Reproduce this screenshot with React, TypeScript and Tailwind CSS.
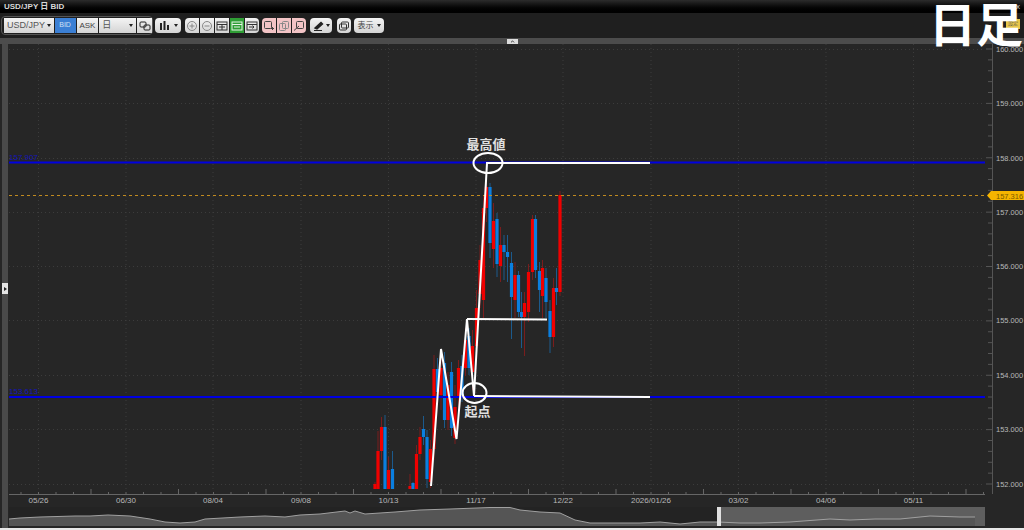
import { ChevronDown } from 'lucide-react';
import type { ReactNode } from 'react';

// [x, bodyTop, bodyBottom, wickTop, wickBottom, up?]
const candles: [number, number, number, number, number, boolean][] = [
  [375, 484, 489, 482, 489, true],
  [378, 451, 489, 431, 489, true],
  [381.5, 427, 451, 417, 460, true],
  [385, 427, 489, 415, 489, false],
  [388.5, 470, 489, 457, 489, true],
  [392.5, 469, 489, 451, 489, false],
  [410, 486, 489, 474, 489, true],
  [413, 483, 489, 482, 489, false],
  [416.5, 454, 489, 445, 489, true],
  [420, 437, 454, 427, 460, true],
  [423.5, 429, 437, 416, 445, false],
  [427, 437, 479, 430, 488, false],
  [430.5, 449, 482, 440, 488, true],
  [434, 369, 449, 355, 460, true],
  [437.5, 369, 392, 358, 405, false],
  [441, 368, 395, 350, 410, true],
  [444.5, 363, 420, 352, 428, false],
  [448, 385, 420, 372, 430, true],
  [451.5, 372, 428, 362, 436, false],
  [455, 407, 438, 385, 444, true],
  [458.5, 368, 398, 360, 410, true],
  [462, 366, 395, 355, 402, false],
  [465.5, 340, 368, 328, 376, true],
  [469, 336, 368, 328, 375, false],
  [472.5, 346, 372, 330, 390, true],
  [476.5, 308, 346, 290, 356, true],
  [480, 260, 294, 245, 308, true],
  [483.5, 208, 300, 195, 318, true],
  [486.5, 187, 208, 175, 222, true],
  [490, 187, 243, 183, 258, false],
  [493.5, 221, 249, 203, 268, true],
  [497, 219, 264, 213, 277, false],
  [500.5, 245, 266, 227, 282, true],
  [504, 245, 252, 235, 280, false],
  [507.5, 252, 257, 235, 282, false],
  [511.5, 263, 297, 252, 339, false],
  [515, 275, 300, 262, 318, true],
  [518.5, 275, 312, 271, 317, false],
  [521.5, 312, 317, 292, 348, false],
  [524.5, 303, 317, 292, 356, true],
  [528.5, 272, 312, 264, 322, true],
  [532.5, 219, 272, 215, 280, true],
  [535.5, 219, 270, 215, 278, false],
  [539.5, 271, 290, 262, 312, false],
  [542.5, 268, 296, 260, 318, true],
  [546, 278, 302, 268, 318, false],
  [550, 311, 337, 300, 353, false],
  [553.5, 288, 337, 278, 347, true],
  [556.5, 288, 292, 268, 305, false],
  [560, 195, 292, 191, 296, true],
];

const prices = [
  ['160.000', 49],
  ['159.000', 103],
  ['158.000', 158],
  ['157.000', 212],
  ['156.000', 266],
  ['155.000', 320],
  ['154.000', 375],
  ['153.000', 429],
  ['152.000', 484],
] as const;

const dates = [
  ['05/26', 38.5],
  ['06/30', 126],
  ['08/04', 213],
  ['09/08', 301],
  ['10/13', 388.5],
  ['11/17', 476],
  ['12/22', 563],
  ['2026/01/26', 651],
  ['03/02', 738.5],
  ['04/06', 826],
  ['05/11', 913.5],
];

const navLine =
  '9,519 20,518 40,517 75,516 90,516 108,515 130,516 150,519 165,522 180,523 195,522 205,519 240,517 265,516 285,517 300,515 320,514 345,511 350,513 355,511 365,514 395,512 420,510 450,509 490,507.5 510,507.5 520,510 540,512 560,513 575,520 590,523 610,523 640,523 660,522 680,524 700,522 718,522 740,523 760,523 790,522 830,519 850,520 875,519 900,519 930,516 960,517 975,517';

const Btn = ({ className, children }: { className: string; children?: ReactNode }) => (
  <div className={`h-[15px] flex items-center bg-gradient-to-b from-[#f4f4f4] to-[#d4d4d4] text-[#444] text-[8px] ${className}`}>
    {children}
  </div>
);

const Ico = ({ children, stroke = '#555' }: { children: ReactNode; stroke?: string }) => (
  <svg width="12" height="12" viewBox="0 0 12 12" fill="none" stroke={stroke} strokeWidth="1">
    {children}
  </svg>
);

const Caret = () => <span className="w-0 h-0 border-x-[2.5px] border-x-transparent border-t-[3px] border-t-[#222]" />;

const Toolbar = () => (
  <div className="h-[25px] flex items-center pl-[1px] bg-[#1f1f1f]">
    <div className="flex items-center gap-[1px] h-[19px] w-[152px] pl-[2px] rounded-sm border border-[#555]">
      <Btn className="w-[50px] justify-between px-[3px]">
        <span className="text-[9px] text-[#555]">USD/JPY</span>
        <Caret />
      </Btn>
      <div className="h-[15px] w-[21px] flex items-center justify-center bg-[#3b7fd4] text-[#cfe0f5] text-[7px]">BID</div>
      <Btn className="w-[22px] justify-center">ASK</Btn>
      <Btn className="w-[37px] justify-between px-[3px]">
        <span className="text-[9px] text-[#555]">日</span>
        <Caret />
      </Btn>
      <Btn className="w-[15px] justify-center">
        <Ico stroke="#222">
          <rect x="1" y="2" width="6" height="5" rx="1" />
          <rect x="5" y="5" width="6" height="5" rx="1" />
        </Ico>
      </Btn>
    </div>
    <Btn className="w-[26px] ml-[2px] justify-center gap-[4px] rounded-sm">
      <svg width="11" height="11" viewBox="0 0 11 11" fill="#222">
        <rect x="1" y="3" width="2" height="7" />
        <rect x="4.5" y="1" width="2" height="9" />
        <rect x="8" y="5" width="2" height="5" />
      </svg>
      <Caret />
    </Btn>
    <div className="flex ml-[4px] gap-[1px]">
      <Btn className="w-[14px] justify-center rounded-l-sm">
        <Ico stroke="#888">
          <circle cx="6" cy="6" r="4.5" />
          <path d="M3.5 6h5M6 3.5v5" />
        </Ico>
      </Btn>
      <Btn className="w-[14px] justify-center">
        <Ico stroke="#888">
          <circle cx="6" cy="6" r="4.5" />
          <path d="M3.5 6h5" />
        </Ico>
      </Btn>
      <Btn className="w-[14px] justify-center">
        <Ico stroke="#333">
          <rect x="1" y="2" width="10" height="8" />
          <path d="M1 4.5h10M6 4.5V10M3 7h6" />
        </Ico>
      </Btn>
      <div className="w-[14px] h-[15px] flex items-center justify-center bg-[#2f9e35]">
        <Ico stroke="#e8f5e8">
          <rect x="1" y="2" width="10" height="8" />
          <path d="M1 4.5h10M3 7h6" />
        </Ico>
      </div>
      <Btn className="w-[14px] justify-center rounded-r-sm">
        <Ico stroke="#333">
          <rect x="1" y="2" width="10" height="8" />
          <path d="M1 4.5h10M3 7h5M6.5 5.5 8 7 6.5 8.5" />
        </Ico>
      </Btn>
    </div>
    <div className="flex ml-[3px] gap-[1px]">
      <div className="w-[14px] h-[15px] flex items-center justify-center bg-[#f3c4c6] rounded-l-sm">
        <Ico stroke="#444">
          <rect x="1.5" y="1.5" width="7" height="7" rx="1" />
          <path d="M8 8.5h3M9.5 7v3" />
        </Ico>
      </div>
      <div className="w-[14px] h-[15px] flex items-center justify-center bg-[#f3c4c6]">
        <Ico stroke="#888">
          <rect x="1.5" y="3.5" width="6" height="7" rx="1" />
          <rect x="4.5" y="1.5" width="6" height="7" rx="1" />
        </Ico>
      </div>
      <div className="w-[14px] h-[15px] flex items-center justify-center bg-[#f3c4c6] rounded-r-sm">
        <Ico stroke="#444">
          <rect x="3.5" y="1.5" width="7" height="7" rx="1" />
          <path d="M1 10.5 6 6" />
        </Ico>
      </div>
    </div>
    <Btn className="w-[22px] ml-[4px] justify-center gap-[2px] rounded-sm">
      <svg width="11" height="11" viewBox="0 0 11 11" fill="none" stroke="#222" strokeWidth="1.4">
        <path d="M2 8 8 2.5l1.5 1.5L4 9z" fill="#222" />
        <path d="M1 10.5h8" strokeWidth="1" />
      </svg>
      <Caret />
    </Btn>
    <Btn className="w-[14px] ml-[5px] justify-center rounded-sm">
      <Ico stroke="#333">
        <rect x="1.5" y="4" width="7" height="6" rx="1" />
        <rect x="3.5" y="2" width="7" height="6" rx="1" />
      </Ico>
    </Btn>
    <Btn className="w-[30px] ml-[3px] justify-center gap-[3px] rounded-sm">
      <span>表示</span>
      <Caret />
    </Btn>
    <span className="ml-auto mr-[4px] mb-[4px] w-[14px] h-[10px] flex items-center justify-center bg-[#e8c64a] text-[5px] text-[#555]">
      設定
    </span>
  </div>
);

const Chart = () => (
  <svg className="block w-full h-full" viewBox="9 44 1015 463" preserveAspectRatio="none">
    {prices.map(([, y]) => (
      <line key={y} x1="9" x2="985" y1={y + 0.5} y2={y + 0.5} stroke="#3c3c3c" strokeDasharray="1 3" />
    ))}
    {dates.map(([, x]) => (
      <line key={x} x1={x} x2={x} y1="44" y2="489" stroke="#3c3c3c" strokeDasharray="1 3" />
    ))}

    {/* price axis */}
    <line x1="992.5" x2="992.5" y1="44" y2="494" stroke="#555" />
    {Array.from({ length: 41 }, (_, i) => 49 + i * 10.875).map((y, i) => (
      <line key={i} x1={i % 5 === 0 ? 986 : 988} x2="992" y1={y} y2={y} stroke="#555" />
    ))}
    {prices.map(([label, y]) => (
      <text key={label} x="996" y={y + 3} fontSize="7.5" fill="#b8b8b8">{label}</text>
    ))}

    {/* time axis */}
    <line x1="9" x2="985" y1="494.5" y2="494.5" stroke="#666" />
    {Array.from({ length: 56 }, (_, i) => 21 + i * 17.5).map((x, i) => (
      <line key={i} x1={x} x2={x} y1={(i + 1) % 5 === 0 ? 489 : 492} y2="494" stroke="#666" />
    ))}
    {dates.map(([label, x]) => (
      <text key={label} x={x} y="503" fontSize="8" fill="#b8b8b8" textAnchor="middle">{label}</text>
    ))}

    {/* candles */}
    {candles.map(([x, top, bottom, wickTop, wickBottom, up], i) => (
      <g key={i}>
        <line x1={x} x2={x} y1={wickTop} y2={wickBottom} stroke={up ? '#7a1d1d' : '#1c5a8c'} />
        <rect x={x - 1.6} y={top} width="3.2" height={bottom - top} fill={up ? '#f00000' : '#0a7fe0'} />
      </g>
    ))}

    {/* levels */}
    <line x1="9" x2="985" y1="162.5" y2="162.5" stroke="#0000e0" strokeWidth="2" />
    <line x1="9" x2="985" y1="397" y2="397" stroke="#0000e0" strokeWidth="2" />
    <line x1="9" x2="985" y1="195.5" y2="195.5" stroke="#c08a20" strokeDasharray="3 3" />
    <text x="9" y="160" fontSize="8" fill="#1414b8">157.907</text>
    <text x="9" y="394" fontSize="8" fill="#1414b8">153.613</text>

    {/* last price tag */}
    <path d="M987 195.5 991 191H1024V200H991Z" fill="#f5b400" />
    <text x="996" y="198.5" fontSize="7.5" fill="#7a5a00">157.316</text>

    {/* hand-drawn marks */}
    <g fill="none" stroke="#fff" strokeWidth="2">
      <polyline points="431,486 441,349 456.5,439 467,319 474,396 487,163 650,163" />
      <line x1="467" x2="547" y1="319" y2="319.5" />
      <line x1="474" x2="650" y1="396" y2="397" />
      <ellipse cx="488" cy="163" rx="14.5" ry="10" />
      <ellipse cx="474.5" cy="393" rx="12" ry="10" />
    </g>
    <text x="486" y="149" fontSize="13" fontWeight="700" fill="#e0e0e0" textAnchor="middle">最高値</text>
    <text x="477.5" y="416" fontSize="13" fontWeight="700" fill="#e0e0e0" textAnchor="middle">起点</text>
  </svg>
);

const Navigator = () => (
  <svg className="block w-full h-full" viewBox="9 507 1015 21" preserveAspectRatio="none">
    <rect x="9" y="507" width="709" height="19" fill="#232323" />
    <rect x="718" y="507" width="267" height="19" fill="#5e5e5e" />
    <polygon points={`${navLine} 975,526 9,526`} fill="#555" />
    <polygon points="718,507 985,507 985,526 975,526 975,517 960,517 930,516 900,519 875,519 850,520 830,519 790,522 760,523 740,523 718,522" fill="#5e5e5e" />
    <polyline points={navLine} fill="none" stroke="#a0a0a0" />
    <rect x="717" y="507" width="4" height="19" fill="#e0e0e0" />
  </svg>
);

export default function App() {
  return (
    <div
      className="relative w-[1024px] h-[530px] overflow-hidden bg-[#262626] flex flex-col"
      style={{ fontFamily: '"Liberation Sans", "Noto Sans CJK JP", sans-serif' }}
    >
      {/* title bar */}
      <div className="h-[13px] flex items-center justify-between px-[4px] bg-gradient-to-b from-[#2c2c2c] to-[#000] text-[8px] font-bold text-[#d8d8d8]">
        <span>USD/JPY 日 BID</span>
        <span className="flex gap-[7px] font-normal text-[#ccc]">
          <span>-</span>
          <span>□</span>
          <span>x</span>
        </span>
      </div>
      <Toolbar />
      {/* splitter */}
      <div className="h-[6px] flex items-center justify-center bg-[#4c4c4c]">
        <div className="w-[11px] h-[5px] flex items-center justify-center bg-[#ddd]">
          <ChevronDown className="w-[5px] h-[5px] text-[#222] rotate-180" strokeWidth={4} />
        </div>
      </div>
      {/* body */}
      <div className="flex-1 flex pl-[2px] min-h-0">
        <div className="w-[6px] bg-[#4a4a4a] flex items-center justify-center mr-[1px]">
          <div className="w-[6px] h-[11px] mt-[5px] bg-[#e4e4e4] flex items-center justify-center">
            <span className="w-0 h-0 border-y-[2.5px] border-y-transparent border-l-[3px] border-l-[#222]" />
          </div>
        </div>
        <div className="flex-1 flex flex-col min-w-0">
          <div className="h-[463px]">
            <Chart />
          </div>
          <div className="h-[21px]">
            <Navigator />
          </div>
        </div>
      </div>
      <div className="h-[2px] bg-[#e8e8e8]" />

      {/* big label laid over the title bar */}
      <div
        className="absolute left-[929px] -top-[6px] text-[47px] leading-[56px] font-bold text-white"
        style={{ fontFamily: '"Noto Sans CJK JP", sans-serif' }}
      >
        日足
      </div>
    </div>
  );
}
